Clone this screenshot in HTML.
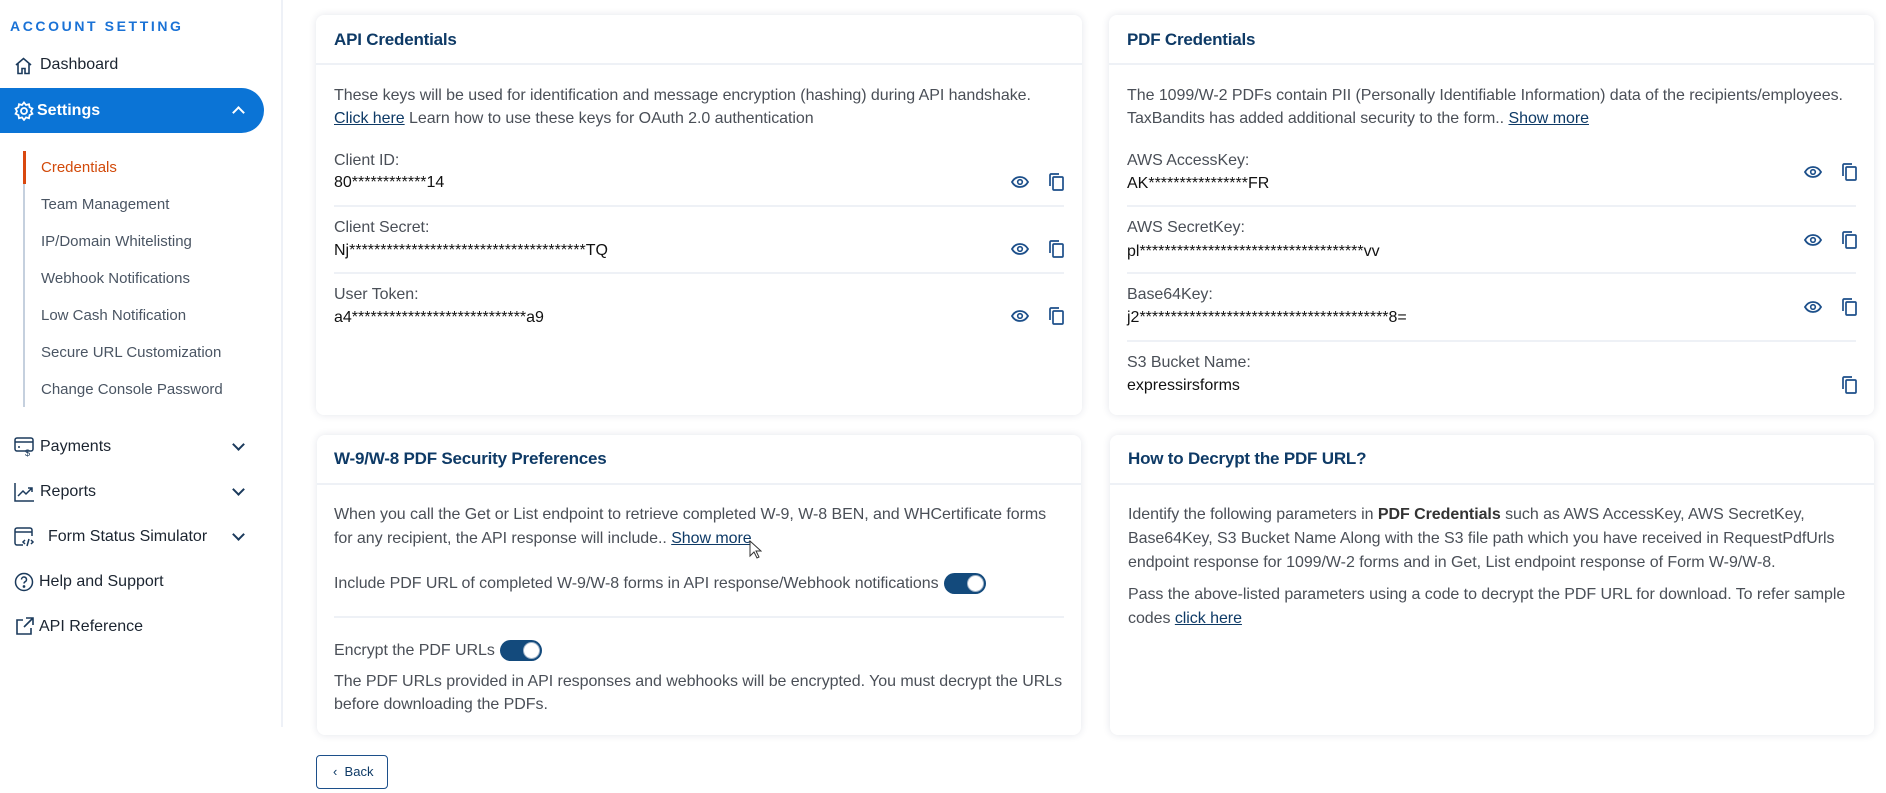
<!DOCTYPE html>
<html><head><meta charset="utf-8"><style>
*{margin:0;padding:0;box-sizing:border-box}
body{width:1886px;height:793px;background:#fff;font-family:"Liberation Sans",sans-serif;position:relative;overflow:hidden;color:#4a4f57}
.a{position:absolute;white-space:nowrap}
.side{position:absolute;left:0;top:0;width:283px;height:727px;border-right:2px solid #eef1f7}
.nav{font-size:16px;color:#1b2430}
.sub{font-size:15px;color:#4a5563}
.card{position:absolute;background:#fff;border-radius:8px;box-shadow:0 0 8px rgba(30,50,90,.12)}
.ttl{font-size:17px;color:#0e3a66;font-weight:bold;letter-spacing:-.2px}
.hd{position:absolute;left:0;right:0;height:2px;background:#eef1f6}
.t{font-size:16px;color:#4a4f57;letter-spacing:-.05px}
.v{font-size:16px;color:#111}
.dv{position:absolute;height:2px;background:#eef1f6}
.lk{color:#0e3a66;text-decoration:underline}
.tg{position:absolute;width:42px;height:21px;border-radius:11px;background:#134a7c}
.tg i{position:absolute;right:2px;top:2px;width:17px;height:17px;border-radius:50%;background:#fff;border:1px solid #9fb3c8}
.chev{position:absolute;width:9px;height:9px;border-right:2px solid #1b3a5c;border-bottom:2px solid #1b3a5c;transform:rotate(45deg)}
</style></head><body>
<div class="side"></div>
<div class="a" style="left:10px;top:18px;font-size:14px;font-weight:bold;color:#1a72d6;letter-spacing:2.6px">ACCOUNT SETTING</div>
<svg class="a" style="left:14px;top:57px" width="19" height="18" viewBox="0 0 19 18" fill="none" stroke="#1b3a5c" stroke-width="1.6"><path d="M2 8L9.5 1.5 17 8M4 6.5V16.5H8V11.5H11V16.5H15V6.5"/></svg>
<div class="a nav" style="left:40px;top:56px">Dashboard</div>
<div class="a" style="left:0;top:88px;width:264px;height:45px;background:#0b74d6;border-radius:0 23px 23px 0"></div>
<svg class="a" style="left:14px;top:101px" width="20" height="20" viewBox="0 0 20 20" fill="none" stroke="#fff" stroke-width="1.8"><circle cx="10" cy="10" r="3"/><path d="M10 1.5l2 2.5 3-.8.6 3.1 2.8 1.3-1.4 2.6 1.4 2.6-2.8 1.3-.6 3.1-3-.8-2 2.5-2-2.5-3 .8-.6-3.1-2.8-1.3 1.4-2.6L1.6 7.6l2.8-1.3.6-3.1 3 .8z"/></svg>
<div class="a" style="left:37px;top:102px;font-size:16px;font-weight:bold;color:#fff">Settings</div>
<div class="chev" style="left:234px;top:108px;border-color:#fff;transform:rotate(-135deg)"></div>
<div class="a" style="left:23px;top:151px;width:2px;height:256px;background:#c5d0de"></div>
<div class="a" style="left:23px;top:151px;width:3px;height:33px;background:#d9480f"></div>
<div class="a sub" style="left:41px;top:159px;color:#d24a0a">Credentials</div>
<div class="a sub" style="left:41px;top:196px">Team Management</div>
<div class="a sub" style="left:41px;top:233px">IP/Domain Whitelisting</div>
<div class="a sub" style="left:41px;top:270px">Webhook Notifications</div>
<div class="a sub" style="left:41px;top:307px">Low Cash Notification</div>
<div class="a sub" style="left:41px;top:344px">Secure URL Customization</div>
<div class="a sub" style="left:41px;top:381px">Change Console Password</div>
<svg class="a" style="left:14px;top:437px" width="21" height="20" viewBox="0 0 21 20" fill="none" stroke="#1b3a5c" stroke-width="1.5"><rect x="1" y="1" width="18" height="13" rx="2"/><path d="M1 5h18M4 10h2"/><text x="11" y="19" font-size="9" fill="#1b3a5c" stroke="none">$</text></svg>
<div class="a nav" style="left:40px;top:438px">Payments</div>
<div class="chev" style="left:234px;top:440px"></div>
<svg class="a" style="left:14px;top:482px" width="21" height="20" viewBox="0 0 21 20" fill="none" stroke="#1b3a5c" stroke-width="1.5"><path d="M1 1v18h19M4 14l5-5 3 3 6-6M14 6h4v4"/></svg>
<div class="a nav" style="left:40px;top:483px">Reports</div>
<div class="chev" style="left:234px;top:485px"></div>
<svg class="a" style="left:14px;top:527px" width="24" height="20" viewBox="0 0 24 20" fill="none" stroke="#1b3a5c" stroke-width="1.5"><path d="M9 18H3a2 2 0 0 1-2-2V3a2 2 0 0 1 2-2h13a2 2 0 0 1 2 2v6M1 5h17M11 13l-2 2 2 2M17 13l2 2-2 2M15 12l-2 7"/></svg>
<div class="a nav" style="left:48px;top:528px">Form Status Simulator</div>
<div class="chev" style="left:234px;top:530px"></div>
<svg class="a" style="left:14px;top:572px" width="20" height="20" viewBox="0 0 20 20" fill="none" stroke="#1b3a5c" stroke-width="1.5"><circle cx="10" cy="10" r="8.5"/><path d="M7.5 7.5a2.5 2.5 0 1 1 3.5 2.3c-.7.4-1 .9-1 1.7"/><circle cx="10" cy="14.5" r=".6" fill="#1b3a5c"/></svg>
<div class="a nav" style="left:39px;top:573px">Help and Support</div>
<svg class="a" style="left:15px;top:617px" width="19" height="19" viewBox="0 0 19 19" fill="none" stroke="#1b3a5c" stroke-width="1.6"><path d="M8 3H2v14h14v-6M11 1h7v7M18 1L9 10"/></svg>
<div class="a nav" style="left:39px;top:618px">API Reference</div>

<!-- API card -->
<div class="card" style="left:316px;top:15px;width:766px;height:400px">
<div class="a ttl" style="left:18px;top:15px">API Credentials</div>
<div class="hd" style="top:48px"></div>
<div class="a t" style="left:18px;top:72px">These keys will be used for identification and message encryption (hashing) during API handshake.</div>
<div class="a t" style="left:18px;top:95px"><span class="lk">Click here</span> Learn how to use these keys for OAuth 2.0 authentication</div>
<div class="a t" style="left:18px;top:137px">Client ID:</div>
<div class="a v" style="left:18px;top:159px">80************14</div>
<div class="dv" style="left:18px;right:18px;top:190px"></div>
<div class="a t" style="left:18px;top:204px">Client Secret:</div>
<div class="a v" style="left:18px;top:227px">Nj**************************************TQ</div>
<div class="dv" style="left:18px;right:18px;top:257px"></div>
<div class="a t" style="left:18px;top:271px">User Token:</div>
<div class="a v" style="left:18px;top:294px">a4****************************a9</div>
</div>

<!-- PDF card -->
<div class="card" style="left:1109px;top:15px;width:765px;height:400px">
<div class="a ttl" style="left:18px;top:15px">PDF Credentials</div>
<div class="hd" style="top:48px"></div>
<div class="a t" style="left:18px;top:72px">The 1099/W-2 PDFs contain PII (Personally Identifiable Information) data of the recipients/employees.</div>
<div class="a t" style="left:18px;top:95px">TaxBandits has added additional security to the form.. <span class="lk">Show more</span></div>
<div class="a t" style="left:18px;top:137px">AWS AccessKey:</div>
<div class="a v" style="left:18px;top:160px">AK****************FR</div>
<div class="dv" style="left:18px;right:18px;top:190px"></div>
<div class="a t" style="left:18px;top:204px">AWS SecretKey:</div>
<div class="a v" style="left:18px;top:228px">pl************************************vv</div>
<div class="dv" style="left:18px;right:18px;top:257px"></div>
<div class="a t" style="left:18px;top:271px">Base64Key:</div>
<div class="a v" style="left:18px;top:294px">j2****************************************8=</div>
<div class="dv" style="left:18px;right:18px;top:325px"></div>
<div class="a t" style="left:18px;top:339px">S3 Bucket Name:</div>
<div class="a v" style="left:18px;top:362px">expressirsforms</div>
</div>

<svg width="0" height="0" style="position:absolute"><defs>
<symbol id="eye" viewBox="0 0 18 12"><path d="M1 6C3 2.5 6 1 9 1s6 1.5 8 5c-2 3.5-5 5-8 5S3 9.5 1 6z" fill="none" stroke="#1c4f8a" stroke-width="1.8"/><circle cx="9" cy="6" r="2.3" fill="none" stroke="#1c4f8a" stroke-width="1.6"/></symbol>
<symbol id="cp" viewBox="0 0 15 18"><path d="M1 13V2a1 1 0 0 1 1-1h8" fill="none" stroke="#1c4f8a" stroke-width="1.7"/><rect x="4" y="4" width="10" height="13" rx="1" fill="none" stroke="#1c4f8a" stroke-width="1.7"/></symbol>
</defs></svg>
<svg class="a" style="left:1011px;top:176px" width="18" height="12"><use href="#eye"/></svg>
<svg class="a" style="left:1049px;top:173px" width="15" height="18"><use href="#cp"/></svg>
<svg class="a" style="left:1011px;top:243px" width="18" height="12"><use href="#eye"/></svg>
<svg class="a" style="left:1049px;top:240px" width="15" height="18"><use href="#cp"/></svg>
<svg class="a" style="left:1011px;top:310px" width="18" height="12"><use href="#eye"/></svg>
<svg class="a" style="left:1049px;top:307px" width="15" height="18"><use href="#cp"/></svg>
<svg class="a" style="left:1804px;top:166px" width="18" height="12"><use href="#eye"/></svg>
<svg class="a" style="left:1842px;top:163px" width="15" height="18"><use href="#cp"/></svg>
<svg class="a" style="left:1804px;top:234px" width="18" height="12"><use href="#eye"/></svg>
<svg class="a" style="left:1842px;top:231px" width="15" height="18"><use href="#cp"/></svg>
<svg class="a" style="left:1804px;top:301px" width="18" height="12"><use href="#eye"/></svg>
<svg class="a" style="left:1842px;top:298px" width="15" height="18"><use href="#cp"/></svg>
<svg class="a" style="left:1842px;top:376px" width="15" height="18"><use href="#cp"/></svg>

<!-- W9 card -->
<div class="card" style="left:317px;top:435px;width:764px;height:300px">
<div class="a ttl" style="left:17px;top:14px">W-9/W-8 PDF Security Preferences</div>
<div class="hd" style="top:48px"></div>
<div class="a t" style="left:17px;top:71px">When you call the Get or List endpoint to retrieve completed W-9, W-8 BEN, and WHCertificate forms</div>
<div class="a t" style="left:17px;top:95px">for any recipient, the API response will include.. <span class="lk">Show more</span></div>
<div class="a t" style="left:17px;top:140px">Include PDF URL of completed W-9/W-8 forms in API response/Webhook notifications</div>
<div class="tg" style="left:627px;top:138px"><i></i></div>
<div class="dv" style="left:17px;right:17px;top:181px"></div>
<div class="a t" style="left:17px;top:207px">Encrypt the PDF URLs</div>
<div class="tg" style="left:183px;top:205px"><i></i></div>
<div class="a t" style="left:17px;top:238px">The PDF URLs provided in API responses and webhooks will be encrypted. You must decrypt the URLs</div>
<div class="a t" style="left:17px;top:261px">before downloading the PDFs.</div>
</div>
<svg class="a" style="left:749px;top:540px" width="13" height="19" viewBox="0 0 13 19"><path d="M1 1v15l4-4 3 6 2-1-3-6h5z" fill="#fff" stroke="#333" stroke-width="1"/></svg>

<!-- Decrypt card -->
<div class="card" style="left:1110px;top:435px;width:764px;height:300px">
<div class="a ttl" style="left:18px;top:14px">How to Decrypt the PDF URL?</div>
<div class="hd" style="top:48px"></div>
<div class="a t" style="left:18px;top:71px">Identify the following parameters in <b style="color:#333">PDF Credentials</b> such as AWS AccessKey, AWS SecretKey,</div>
<div class="a t" style="left:18px;top:95px">Base64Key, S3 Bucket Name Along with the S3 file path which you have received in RequestPdfUrls</div>
<div class="a t" style="left:18px;top:119px">endpoint response for 1099/W-2 forms and in Get, List endpoint response of Form W-9/W-8.</div>
<div class="a t" style="left:18px;top:151px">Pass the above-listed parameters using a code to decrypt the PDF URL for download. To refer sample</div>
<div class="a t" style="left:18px;top:175px">codes <span class="lk">click here</span></div>
</div>

<div class="a" style="left:316px;top:755px;width:72px;height:34px;border:1px solid #1c4f8a;border-radius:4px;font-size:13px;color:#0e3a66;line-height:32px;padding-left:16px">‹&nbsp;&nbsp;Back</div>
</body></html>
